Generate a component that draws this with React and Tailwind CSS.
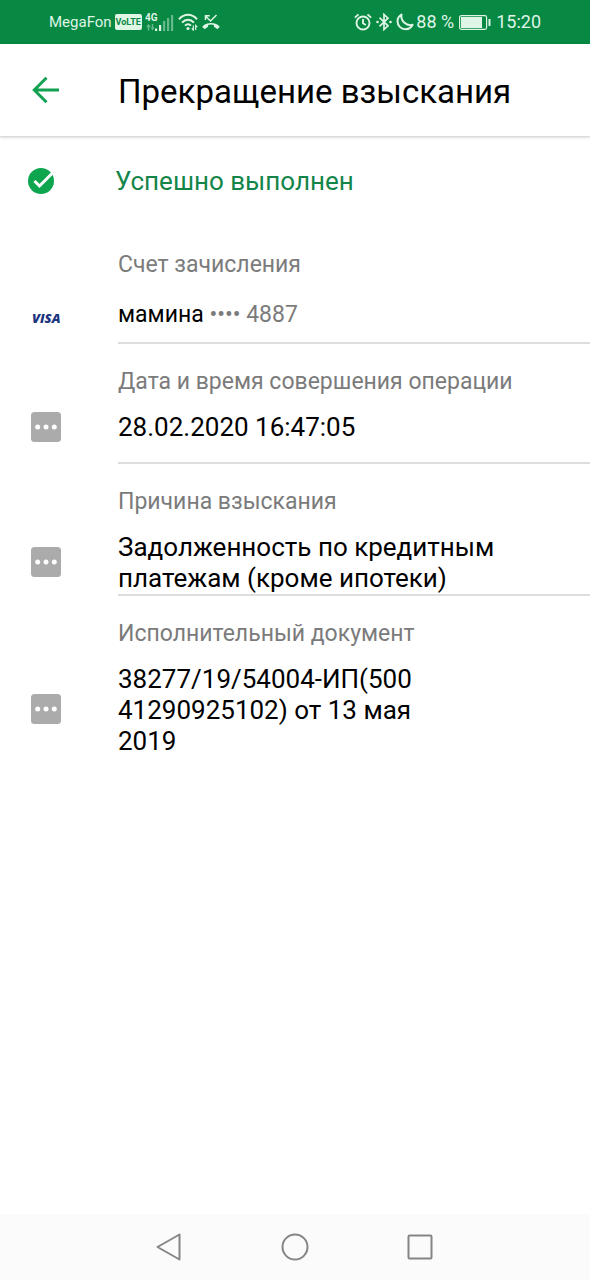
import clsx from "clsx";

const details = [
  {
    id: "account",
    label: "Счет зачисления",
    icon: "visa",
    value: (
      <>
        мамина <span className="text-[#7b7b7b]">•••• 4887</span>
      </>
    ),
    labelClass: "pb-5",
    valueClass: "text-[23px] pb-3",
  },
  {
    id: "date",
    label: "Дата и время совершения операции",
    icon: "more",
    value: "28.02.2020 16:47:05",
    labelClass: "pb-4",
    valueClass: "text-[26px] pb-[18px]",
  },
  {
    id: "reason",
    label: "Причина взыскания",
    icon: "more",
    value: "Задолженность по кредитным\nплатежам (кроме ипотеки)",
    labelClass: "pb-4",
    valueClass: "text-[26px]",
  },
  {
    id: "document",
    label: "Исполнительный документ",
    icon: "more",
    value: "38277/19/54004-ИП(500\n41290925102) от 13 мая\n2019",
    labelClass: "pb-4",
    valueClass: "text-[26px]",
  },
];

function SignalIcon() {
  return (
    <svg width="30" height="20" viewBox="0 0 30 20" fill="currentColor" aria-hidden="true">
      <text x="0" y="9" className="font-['Liberation_Sans_Narrow',Roboto,sans-serif] text-[10px] font-bold">4G</text>
      <g opacity="0.45">
        <path d="M3.500 12l2.500 3H4.300v3.500H2.700V15H1zM7.500 18.500L5.500 15.500h1.300V12h1.400v3.500h1.300z" />
        <rect x="18" y="9" width="2.200" height="10" />
        <rect x="22" y="6" width="2.200" height="13" />
        <rect x="26" y="3" width="2.200" height="16" />
      </g>
      <rect x="10" y="16.500" width="2.200" height="2.500" />
      <rect x="14" y="13" width="2.200" height="6" />
    </svg>
  );
}

function WifiIcon() {
  return (
    <svg width="21" height="18" viewBox="0 0 21 18" fill="none" stroke="currentColor" strokeWidth="2" aria-hidden="true">
      <path d="M1 6.200C6.500.4 13.500.4 19 6.200" />
      <path d="M4 9.600c3.500-3.900 8.500-3.900 12 0" />
      <path d="M7 12.700c1.800-2 4.200-2 6 0" />
      <circle cx="10" cy="15.500" r="1.600" fill="currentColor" stroke="none" />
      <path d="M15.300 12.500V17l-1.600-1.700M17.700 17v-4.500l1.600 1.700" strokeWidth="1.200" />
    </svg>
  );
}

function MissedCallIcon() {
  return (
    <svg width="18" height="16" viewBox="0 0 18 16" fill="none" stroke="currentColor" strokeWidth="1.500" aria-hidden="true">
      <path d="M14.500 1L8.500 7L3.500 2M3.500 6V1.700h4.300" />
      <path
        d="M.6 12.200C5 8 13 8 17.400 12.200c.3.300.3.700 0 1l-1.600 1.600c-.3.300-.7.300-1 0l-2.500-1.800c-.3-.2-.4-.5-.4-.8v-1.300a10 10 0 0 0-5.800 0v1.300c0 .3-.1.600-.4.800l-2.500 1.800c-.3.300-.7.300-1 0L.6 13.200c-.3-.3-.3-.7 0-1z"
        fill="currentColor"
        stroke="none"
      />
    </svg>
  );
}

function AlarmIcon() {
  return (
    <svg width="18" height="18" viewBox="0 0 18 18" fill="none" stroke="currentColor" strokeWidth="1.900" aria-hidden="true">
      <circle cx="9" cy="10" r="6.500" />
      <path d="M9 6v4.300l2.800 1.700M.9 4.600L4.500 1.400M17.100 4.600L13.500 1.400" />
    </svg>
  );
}

function BluetoothIcon() {
  return (
    <svg width="16" height="18" viewBox="0 0 16 18" fill="none" stroke="currentColor" strokeWidth="1.700" aria-hidden="true">
      <path d="M3.500 4.700L12 12.800L8 16.500V1.500L12 5.200L3.500 13.300" />
      <circle cx="1.500" cy="9" r="1.300" fill="currentColor" stroke="none" />
      <circle cx="14.500" cy="9" r="1.300" fill="currentColor" stroke="none" />
    </svg>
  );
}

function MoonIcon() {
  return (
    <svg width="18" height="18" viewBox="0 0 18 18" fill="none" stroke="currentColor" strokeWidth="2" strokeLinejoin="round" aria-hidden="true">
      <path d="M5.500 1.500C3 3 1.500 5.400 1.500 8.300c0 4.300 3.500 7.900 7.900 7.900 3.100 0 5.900-1.700 7.200-4.400-5.700 1.600-12.300-3.400-11.100-10.300z" />
    </svg>
  );
}

function BatteryIcon() {
  return (
    <svg width="32" height="15" viewBox="0 0 32 15" fill="currentColor" aria-hidden="true">
      <rect x="0.600" y="0.600" width="27" height="13.800" rx="1.800" fill="none" stroke="currentColor" strokeWidth="1.200" />
      <rect x="2" y="2" width="21" height="11" />
      <rect x="29.500" y="4" width="2" height="7" rx="0.500" />
    </svg>
  );
}

function StatusBar() {
  return (
    <div className="flex h-11 items-center justify-between bg-[#078843] px-[49px] text-[#dff5e6]">
      <div className="flex items-center gap-[3px]">
        <span className="text-[15px] leading-5">MegaFon</span>
        <span className="rounded-xs bg-[#dff5e6] px-px font-['Liberation_Sans_Narrow',Roboto,sans-serif] text-[9px] leading-4 font-bold text-[#078843]">
          VoLTE
        </span>
        <SignalIcon />
        <WifiIcon />
        <MissedCallIcon />
      </div>
      <div className="flex items-center gap-[5px] text-lg leading-5">
        <div className="flex items-center gap-0.5">
          <div className="flex items-center gap-1">
            <AlarmIcon />
            <BluetoothIcon />
            <MoonIcon />
          </div>
          <span>88 %</span>
        </div>
        <BatteryIcon />
        <span>15:20</span>
      </div>
    </div>
  );
}

function MoreIcon() {
  return (
    <svg className="mb-1" width="30" height="30" viewBox="0 0 30 30" aria-hidden="true">
      <rect width="30" height="30" rx="3.500" fill="#ababab" />
      <g fill="#fff">
        <circle cx="6.700" cy="15" r="2.500" />
        <circle cx="15" cy="15" r="2.500" />
        <circle cx="23.300" cy="15" r="2.500" />
      </g>
    </svg>
  );
}

function VisaLogo() {
  return (
    <span className="pt-1 pl-px font-['Open_Sans'] text-[13px] leading-7 font-extrabold text-[#1c3480] italic">
      VISA
    </span>
  );
}

function DetailRow({ item, last }) {
  return (
    <div className="grid grid-cols-[118px_1fr]">
      <dt className={clsx("col-start-2 pt-6 text-[23px] leading-7 text-[#7b7b7b]", item.labelClass)}>
        {item.label}
      </dt>
      <dd className="col-span-2 grid grid-cols-subgrid">
        <span className={clsx("flex items-center pl-[31px]", item.valueClass)}>
          {item.icon === "visa" ? <VisaLogo /> : <MoreIcon />}
        </span>
        <span
          className={clsx(
            "leading-[31px] whitespace-pre-line text-black",
            item.valueClass,
            !last && "border-b-2 border-[#dedede]"
          )}
        >
          {item.value}
        </span>
      </dd>
    </div>
  );
}

export default function App() {
  return (
    <div className="flex min-h-screen flex-col bg-white font-[Roboto,sans-serif]">
      <StatusBar />

      {/* Header */}
      <header className="flex h-[93px] items-center border-b border-[#dcdcdc] shadow-sm">
        <button type="button" aria-label="Назад" className="w-[118px] pl-8">
          <svg width="28" height="28" viewBox="0 0 28 28" fill="none" stroke="#12a150" strokeWidth="3" aria-hidden="true">
            <path d="M27 14H3M14.500 1.800L2.300 14l12.200 12.200" />
          </svg>
        </button>
        <h1 className="pt-1 text-[33px] leading-10 text-black">Прекращение взыскания</h1>
      </header>

      <main className="flex-1">
        {/* Operation status */}
        <div className="flex h-[88px] items-center">
          <div className="w-[115px] pl-7">
            <svg width="27" height="27" viewBox="0 0 27 27" aria-hidden="true">
              <circle cx="13" cy="13" r="13" fill="#0da64f" />
              <path d="M6.500 13l5 5L26 3.500" fill="none" stroke="#fff" strokeWidth="3" />
            </svg>
          </div>
          <p className="text-[26px] leading-8 text-[#138548]">Успешно выполнен</p>
        </div>

        <dl className="pt-0.5">
          {details.map((item, index) => (
            <DetailRow key={item.id} item={item} last={index === details.length - 1} />
          ))}
        </dl>
      </main>

      {/* System navigation */}
      <nav className="flex h-[66px] items-center justify-center gap-[97px] bg-[#fbfbfb] text-[#858585]">
        <button type="button" aria-label="Назад">
          <svg width="28" height="28" viewBox="0 0 28 28" fill="none" stroke="currentColor" strokeWidth="2" strokeLinejoin="round" aria-hidden="true">
            <path d="M23.500 1.500v25L1.500 14z" />
          </svg>
        </button>
        <button type="button" aria-label="Домой">
          <svg width="28" height="28" viewBox="0 0 28 28" fill="none" stroke="currentColor" strokeWidth="2" aria-hidden="true">
            <circle cx="14" cy="14" r="12.500" />
          </svg>
        </button>
        <button type="button" aria-label="Недавние">
          <svg width="28" height="28" viewBox="0 0 28 28" fill="none" stroke="currentColor" strokeWidth="2" aria-hidden="true">
            <rect x="2.500" y="2.500" width="23" height="23" rx="1" />
          </svg>
        </button>
      </nav>
    </div>
  );
}
